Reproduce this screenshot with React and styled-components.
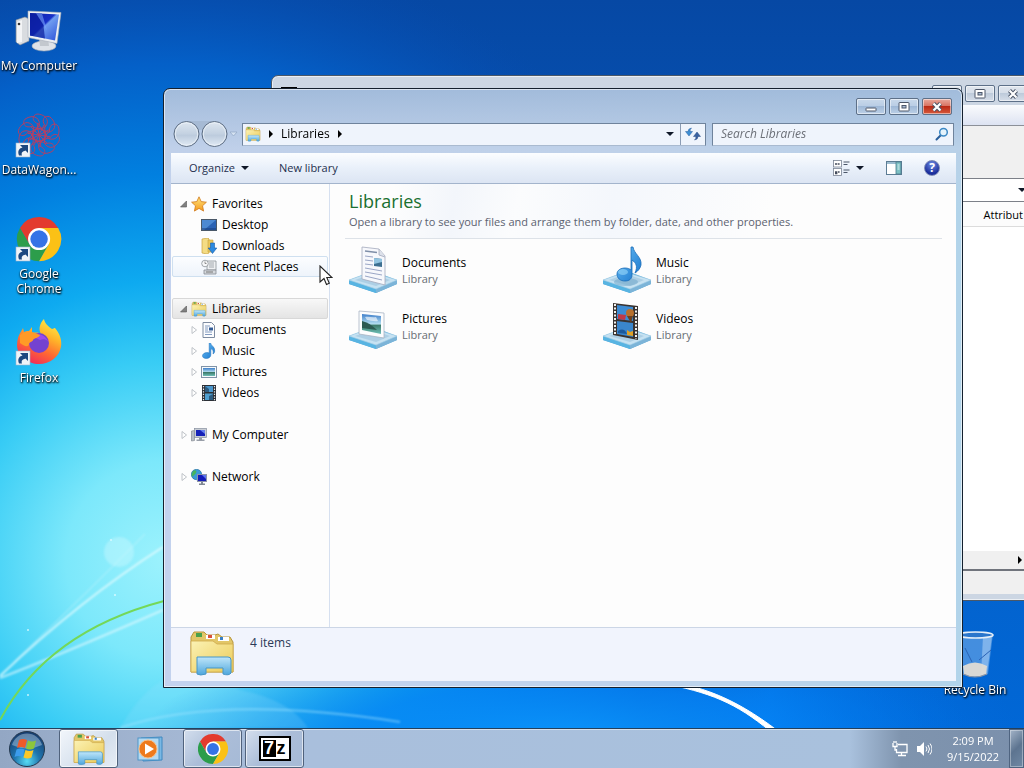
import React from 'react';
import styled, { createGlobalStyle } from 'styled-components';

const GlobalStyle = createGlobalStyle`
    *{
        box-sizing:border-box;
    }
    body{
        margin:0;
        overflow:hidden;
        font-family:"Open Sans", "Noto Sans", sans-serif;
        font-size:12px;
        line-height:16px;
        color:#000;
    }
    button, input, select{
        font:inherit;
        color:inherit;
        border:none;
        background:none;
        padding:0;
        margin:0;
        outline:none;
    }
    ul{
        list-style:none;
        margin:0;
        padding:0;
    }
    svg{
        display:block;
        flex:none;
    }
`;

/* ---------- wallpaper ---------- */

function Wallpaper() {
    return (
        <WallpaperSvg viewBox="0 0 1024 768" preserveAspectRatio="none" aria-hidden="true">
            <defs>
                <linearGradient id="sky" x1="0" y1="0" x2="0" y2="1">
                    <stop offset="0" stopColor="#0648a4" />
                    <stop offset=".6" stopColor="#0560c8" />
                    <stop offset="1" stopColor="#0068d8" />
                </linearGradient>
                <radialGradient id="glow" gradientUnits="userSpaceOnUse" cx="165" cy="560" r="620">
                    <stop offset="0" stopColor="#9cf2fd" />
                    <stop offset=".16" stopColor="#7ce8fb" />
                    <stop offset=".32" stopColor="#38ccf5" />
                    <stop offset=".45" stopColor="#0eaaf0" />
                    <stop offset=".62" stopColor="#0180e0" />
                    <stop offset=".8" stopColor="#0460c8" />
                    <stop offset="1" stopColor="#084cb0" stopOpacity="0" />
                </radialGradient>
                <radialGradient id="floor">
                    <stop offset="0" stopColor="#0c96fb" />
                    <stop offset=".5" stopColor="#0582f4" stopOpacity=".8" />
                    <stop offset="1" stopColor="#0070e4" stopOpacity="0" />
                </radialGradient>
                <linearGradient id="screen" x1="0" y1="0" x2="1" y2="1">
                    <stop offset="0" stopColor="#0b1fa8" />
                    <stop offset=".45" stopColor="#1830c8" />
                    <stop offset=".5" stopColor="#6f9cf0" />
                    <stop offset="1" stopColor="#2c50d8" />
                </linearGradient>
                <linearGradient id="folder" x1="0" y1="0" x2="1" y2="1">
                    <stop offset="0" stopColor="#fbf2b4" />
                    <stop offset="1" stopColor="#eccb58" />
                </linearGradient>
                <linearGradient id="holder" x1="0" y1="0" x2="0" y2="1">
                    <stop offset="0" stopColor="#bfe6fa" />
                    <stop offset="1" stopColor="#4ea6dc" />
                </linearGradient>
                <linearGradient id="note" x1="0" y1="0" x2="1" y2="1">
                    <stop offset="0" stopColor="#6cc0f6" />
                    <stop offset="1" stopColor="#1674cc" />
                </linearGradient>
                <linearGradient id="photo" x1="0" y1="0" x2="0" y2="1">
                    <stop offset="0" stopColor="#3f7fca" />
                    <stop offset=".5" stopColor="#b4def0" />
                    <stop offset=".56" stopColor="#3d7a6a" />
                    <stop offset="1" stopColor="#6ec0b8" />
                </linearGradient>
                <linearGradient id="fire" x1=".8" y1="0" x2=".3" y2="1">
                    <stop offset="0" stopColor="#fff14a" />
                    <stop offset=".35" stopColor="#ffb429" />
                    <stop offset=".65" stopColor="#ff6a32" />
                    <stop offset="1" stopColor="#f0285c" />
                </linearGradient>
                <radialGradient id="orb" cx=".5" cy=".85" r=".8">
                    <stop offset="0" stopColor="#58dcf4" />
                    <stop offset=".45" stopColor="#1f75ae" />
                    <stop offset="1" stopColor="#173f70" />
                </radialGradient>
                <linearGradient id="knob" x1="0" y1="0" x2="0" y2="1">
                    <stop offset="0" stopColor="#dfe7f0" />
                    <stop offset=".5" stopColor="#c3d1e1" />
                    <stop offset=".55" stopColor="#bccbdd" />
                    <stop offset="1" stopColor="#e2ebf5" />
                </linearGradient>
                <linearGradient id="star" x1="0" y1="0" x2="0" y2="1">
                    <stop offset="0" stopColor="#ffe680" />
                    <stop offset="1" stopColor="#f59a1c" />
                </linearGradient>
                <filter id="soft" x="-20%" y="-20%" width="140%" height="140%">
                    <feGaussianBlur stdDeviation="1" />
                </filter>
            </defs>
            <rect width="1024" height="768" fill="url(#sky)" />
            <ellipse cx="540" cy="740" rx="480" ry="170" fill="url(#floor)" />
            <rect width="1024" height="768" fill="url(#glow)" />
            <ellipse cx="560" cy="740" rx="420" ry="110" fill="url(#floor)" />
            <g fill="none" filter="url(#soft)">
                <path d="M0 678Q60 655 163 610" stroke="#dffaff" strokeWidth="2" opacity=".7" />
                <path d="M0 676Q80 600 163 547" stroke="#e8fcff" strokeWidth="2" opacity=".8" />
                <path d="M14 662Q90 590 145 534" stroke="#d8f8ff" strokeWidth="1" opacity=".6" />
                <path d="M120 728Q220 694 400 722" stroke="#a8e8ff" strokeWidth="2" opacity=".5" />
                <path d="M120 728Q170 640 240 690Q290 700 308 728" fill="#9fe6ff" opacity=".18" />
            </g>
            <path d="M0 720C30 664 84 622 164 601" fill="none" stroke="#74d858" strokeWidth="2" />
            <circle cx="119" cy="552" r="15" fill="#c8f8ff" opacity=".45" filter="url(#soft)" />
            <path d="M660 680C700 686 732 696 778 731L770 731C736 703 710 692 660 683Z" fill="#fff" stroke="#fff" strokeWidth="1" />
            <g fill="#e8fdff" opacity=".8">
                <circle cx="111" cy="540" r="1" />
                <circle cx="115" cy="595" r="1" />
                <circle cx="28" cy="695" r="1" />
                <circle cx="28" cy="630" r="1" />
            </g>
        </WallpaperSvg>
    );
}

/* ---------- desktop icons ---------- */

const ShortcutArrow = () => (
    <g>
        <rect x="1" y="33" width="14" height="14" fill="#f0f4f8" stroke="#9fb4cc" strokeWidth=".6" />
        <path d="M4 45.500c-1.500-4-.5-7 3.500-8L5 35h8v8l-2.500-2.500c-3 1-4.500 2-3.500 5z" fill="#1c4880" />
    </g>
);

const ComputerIcon = () => (
    <svg width="48" height="48" viewBox="0 0 48 48">
        <path d="M1 14l9-3 4 2v22l-9 4-4-3z" fill="#d9dce0" stroke="#8a9098" strokeWidth=".6" />
        <path d="M2 16l5-2v22l-5 1z" fill="#f3f4f6" />
        <circle cx="4" cy="18" r="1.3" fill="#333" />
        <ellipse cx="29" cy="40" rx="12" ry="5" fill="#dfe3e8" stroke="#a4abb4" strokeWidth=".6" />
        <path d="M24 32h9l1 8h-9z" fill="#c3c8ce" />
        <path d="M13 5l33 1.500-4 31-29-6z" fill="#eceff2" stroke="#a6adb8" strokeWidth=".6" />
        <path d="M15 7l29 1.500-4 26-25-5z" fill="url(#screen)" />
        <path d="M15 7l12 .5 3 25-15-3z" fill="#0a1c9c" opacity=".7" />
        <path d="M21 7.300l6 .3 5 17z" fill="#7aa5ff" opacity=".6" />
    </svg>
);

const WagonIcon = () => (
    <svg width="48" height="48" viewBox="0 0 48 48">
        <g fill="none" stroke="#c83a58" strokeWidth=".9" opacity=".9">
            {[0, 36, 72, 108, 144, 180, 216, 252, 288, 324].map((a) => (
                <g key={a} transform={`rotate(${a} 24 25)`}>
                    <path d="M24 14c-8-2-7-9-2-10 6 0 12 4 10 10-1 6-12 5-15 2" />
                    <path d="M24 25l5-10M21 18l6 1" />
                </g>
            ))}
            <circle cx="24" cy="25" r="6" />
        </g>
        <ShortcutArrow />
    </svg>
);

const ChromeShape = () => (
    <g>
        <path d="M24 12H44.800A24 24 0 0 0 3.200 12L13.600 30Z" fill="#e33b2e" />
        <path d="M13.600 30L3.200 12A24 24 0 0 0 24 48L34.400 30Z" fill="#2c9d4b" />
        <path d="M34.400 30L24 48A24 24 0 0 0 44.800 12H24Z" fill="#fbc116" />
        <circle cx="24" cy="24" r="12" fill="#fff" />
        <circle cx="24" cy="24" r="9.500" fill="#3573e6" />
    </g>
);

const ChromeIcon = () => (
    <svg width="48" height="48" viewBox="0 0 48 48">
        <g transform="translate(2 3) scale(.92)"><ChromeShape /></g>
        <ShortcutArrow />
    </svg>
);

const FirefoxIcon = () => (
    <svg width="48" height="48" viewBox="0 0 48 48">
        <path d="M29 1c1 5 4 7 8 10 3-1 2-1 3-1 5 6 7 12 6 19-2 10-11 17-22 17S2 38 2 27c0-6 2-11 5-15l1-2 1 4c2-1 3-1 5-1l3-4v6c4-1 8 0 9 1-3-5-1-11 3-15z" fill="url(#fire)" />
        <circle cx="24" cy="25" r="10" fill="#7442d0" />
        <path d="M17 18c6-4 13-1 16 5-3-2-5-2-8-1z" fill="#9a4bea" />
        <path d="M5 17c4-4 8-4 12-3l8 3c-1 3-6 3-7 5 0 2-3 1-4 4-1 4-5 2-9-1z" fill="#ff9a26" />
        <ShortcutArrow />
    </svg>
);

const BinIcon = () => (
    <svg width="48" height="48" viewBox="0 0 48 48">
        <path d="M7 4h35l-5 40q-13 6-25 0z" fill="#a8cdf2" opacity=".4" />
        <path d="M32 6h9l-5 38-6 2z" fill="#d6eaff" opacity=".4" />
        <path d="M12 36q12-7 24 0l-1 8q-12 5-22 0z" fill="#e0dcd4" opacity=".95" />
        <ellipse cx="24.500" cy="5" rx="17.500" ry="3" fill="#2a76cc" stroke="#e4eef8" strokeWidth="1.600" />
        <path d="M28 30l12-10M14 18l7 14" stroke="#2a62b4" strokeWidth="1" />
        <path d="M12 44q12 6 24 0" fill="none" stroke="#8b94a4" strokeWidth="1.200" />
    </svg>
);

/* ---------- explorer icons ---------- */

const LibrariesIcon = ({ size = 16 }) => (
    <svg width={size} height={size} viewBox="0 0 48 48">
        <path d="M3 8l3-5h10l3 3h8l3-1 4 3h8l3 5v30H3z" fill="#e2c668" stroke="#b8963c" />
        <path d="M8 4h6v4H8z" fill="#4aa04c" />
        <path d="M18 6h9v4h-9z" fill="#fff" />
        <path d="M20 6h4v3h-4z" fill="#d8503a" />
        <path d="M30 8h11v4H30z" fill="#fff" />
        <path d="M32 8h3v3h-3z" fill="#3a80c8" />
        <path d="M3 12h22l4 3h16v28H3z" fill="url(#folder)" stroke="#cfa94a" strokeWidth=".8" />
        <path d="M9 28h31q3 0 3 3v13q-2 3-8 1v-6H18v6q-6 2-9 0z" fill="url(#holder)" stroke="#4796c8" />
    </svg>
);

const StarIcon = () => (
    <svg width="16" height="16" viewBox="0 0 16 16">
        <path d="M8 .800l2.200 4.800 5.200.600-3.900 3.600 1.100 5.300L8 12.400l-4.600 2.700 1.100-5.300L.600 6.200l5.200-.600z" fill="url(#star)" stroke="#d0791a" strokeWidth=".8" />
    </svg>
);

const DesktopIcon = () => (
    <svg width="16" height="16" viewBox="0 0 16 16">
        <rect x=".5" y="2.500" width="15" height="11" fill="#2a62b4" stroke="#4a5868" />
        <path d="M1 3h14L3 13H1z" fill="#5b9ade" opacity=".7" />
        <path d="M1 12h14" stroke="#183c78" />
    </svg>
);

const DownloadsIcon = () => (
    <svg width="16" height="16" viewBox="0 0 16 16">
        <path d="M1 1l6-1 1 1v14l-2 1-5-1z" fill="#f4dc84" stroke="#c8a23c" strokeWidth=".7" />
        <path d="M7 2h5v12H7z" fill="#ecc85c" stroke="#c8a23c" strokeWidth=".6" />
        <path d="M9.500 5h4v5h2.300L11.500 15.500 7.200 10h2.300z" fill="#2c8ae0" stroke="#1a5ca8" strokeWidth=".6" />
    </svg>
);

const RecentIcon = () => (
    <svg width="16" height="16" viewBox="0 0 16 16">
        <path d="M6 2h9v9H6z" fill="#eef0f2" stroke="#8c9298" strokeWidth=".8" />
        <path d="M8 4h5M8 6h5M8 8h5" stroke="#90979e" strokeWidth=".8" />
        <path d="M3 11h12v4H3z" fill="#d4d8dc" stroke="#868c92" strokeWidth=".8" />
        <path d="M5 13h7" stroke="#777" />
        <circle cx="4" cy="4.500" r="3.300" fill="#f7f8f9" stroke="#8a9096" strokeWidth=".8" />
        <path d="M4 2.500v2h1.500" fill="none" stroke="#666" strokeWidth=".7" />
    </svg>
);

const DocIcon = () => (
    <svg width="16" height="16" viewBox="0 0 16 16">
        <path d="M2 .500h8.500l3 3v12H2z" fill="#fbfcfe" stroke="#7d8ba0" />
        <path d="M4 4h5M4 6h3M4 8h3M4 10h7M4 12.500h7" stroke="#7590b8" strokeWidth=".9" />
        <path d="M8 5.500h4v3H8z" fill="#345c96" />
    </svg>
);

const MusicIcon = () => (
    <svg width="16" height="16" viewBox="0 0 16 16">
        <path d="M8.200 0h1.300c.5 3 4.600 3.500 4.200 8-.1 1.500-.8 2.500-1.700 3 1-3-.6-4.600-2.200-5.500V12c0 2-2 3.500-4.400 3.500S1.500 14.500 1.500 12.800s2-3.200 4.200-3.200c1 0 1.800.1 2.500.5z" fill="url(#note)" stroke="#1b6cb8" strokeWidth=".5" />
    </svg>
);

const PictureIcon = () => (
    <svg width="16" height="16" viewBox="0 0 16 16">
        <rect x=".5" y="2.500" width="15" height="11" fill="#f6fafc" stroke="#8093a8" />
        <rect x="2" y="4" width="12" height="8" fill="url(#photo)" />
    </svg>
);

const VideoIcon = () => (
    <svg width="16" height="16" viewBox="0 0 16 16">
        <rect x="1" y="0" width="14" height="16" fill="#2c3036" />
        <rect x="4" y="1" width="8" height="6" fill="#4a96cc" />
        <rect x="4" y="8.500" width="8" height="6.500" fill="#4f9fd0" />
        <path d="M4 1l4 3v3H4zM12 9l-4 2v4h4z" fill="#2d5c80" />
        <path d="M2.500 1v15M13.500 1v15" stroke="#e8ecf0" strokeWidth="1.200" strokeDasharray="1.300 1.300" />
    </svg>
);

const SmallComputerIcon = () => (
    <svg width="16" height="16" viewBox="0 0 16 16">
        <path d="M.500 4l3-.500v10l-3 .500z" fill="#b8bec6" stroke="#788088" strokeWidth=".6" />
        <rect x="3.500" y="1.500" width="12" height="9" fill="#c8cdd4" stroke="#8890a0" strokeWidth=".7" />
        <rect x="5" y="3" width="9" height="6" fill="#1622b8" />
        <path d="M9 3h5v4z" fill="#6680f0" />
        <path d="M8 11h3v1.500h2.500V14h-8v-1.500H8z" fill="#989ea8" />
    </svg>
);

const NetworkIcon = () => (
    <svg width="16" height="16" viewBox="0 0 16 16">
        <circle cx="5.500" cy="5.500" r="5.200" fill="#3a9ad8" stroke="#186a98" strokeWidth=".6" />
        <path d="M2 2c3-2 4 0 3 2s-3 2-3 4L.500 6zM6 7c2-1 3 0 3 2l-3 1.500z" fill="#46b45c" />
        <rect x="6.500" y="5.500" width="9" height="7" fill="#141cb8" stroke="#8c94a8" />
        <path d="M11 6h4v4z" fill="#5c74f0" />
        <path d="M10 13h2v1.500h2V16H8v-1.500h2z" fill="#808894" />
    </svg>
);

const Tray = () => (
    <g>
        <path d="M0 34l24-9 24 9v4L27 47 0 38z" fill="#5aaad8" />
        <path d="M0 34l27 9v4L0 38z" fill="#58b4e2" />
        <path d="M27 43l21-9v4l-21 9z" fill="#7cb4d8" />
        <path d="M0 34l22-8 26 8-21 9z" fill="#c6e2f2" stroke="#a4cfe6" strokeWidth=".6" />
        <path d="M6 34l17-6 18 6-14 6z" fill="#a3c8e0" opacity=".7" />
    </g>
);

const LibraryArt = ({ kind }) => (
    <svg width="48" height="48" viewBox="0 0 48 48">
        <Tray />
        {kind === 'documents' && (
            <g>
                <path d="M13 1l17 2 6 7v29l-23-6z" fill="#f7f8fc" stroke="#a3a9bc" strokeWidth=".8" />
                <path d="M30 3v6l6 2" fill="#dde1ea" stroke="#a3a9bc" strokeWidth=".8" />
                <path d="M16 5l12 1.500" stroke="#7e8ea8" strokeWidth="1.500" />
                <path d="M16 10l8 1M16 14l8 1M16 18l8 1M16 22l17 3M16 26l17 3M16 30l17 4" stroke="#9aa6c6" />
                <path d="M25 12l8 1v8l-8-1z" fill="#3d6f90" />
                <path d="M25 12l8 1v3l-8 2z" fill="#92c4e0" />
            </g>
        )}
        {kind === 'music' && (
            <g>
                <ellipse cx="23" cy="36" rx="12" ry="4" fill="#6aa4c8" opacity=".5" />
                <path d="M28 1h2c1 7 9 10 8 18-1 4-3 6-6 8 3-7 1-10-3-13v15c0 4-3 6-7 6-5 0-8-3-8-7s4-6 8-6c3 0 5 1 6 2z" fill="url(#note)" stroke="#1b6cb8" strokeWidth=".8" />
                <ellipse cx="20" cy="26" rx="5" ry="3" fill="#9ad8fa" opacity=".6" />
            </g>
        )}
        {kind === 'pictures' && (
            <g>
                <path d="M10 9l25 2v25l-25-4z" fill="#fcfdfe" stroke="#a8b4c4" strokeWidth=".8" />
                <path d="M13 12l19 2v18l-19-4z" fill="url(#photo)" />
                <path d="M13 19c5 1 10 4 15 9l-15-2z" fill="#2c5a52" />
                <path d="M16 15c4-1 7 1 11 0l2 4c-4 1-8-1-11-1z" fill="#fff" opacity=".6" />
            </g>
        )}
        {kind === 'videos' && (
            <g>
                <path d="M10 1l25 3v34l-25-5z" fill="#3a3330" />
                <path d="M14 3l16 2v14l-16-2z" fill="#3d8cd4" />
                <path d="M14 19l16 2v14l-16-3z" fill="#3a86cc" />
                <path d="M15 12l8 1-1 5-7-1z" fill="#c03a48" />
                <circle cx="27" cy="11" r="4" fill="#b8702c" />
                <path d="M24 14h6l-2 7z" fill="#70401c" />
                <path d="M24 28l3 2 3-1v5l-6-1z" fill="#e0a024" />
                <path d="M15 29q6-4 9 3l-9-1z" fill="#1c5a9c" />
                <path d="M12 2v31M33 5v32" stroke="#f2f2f0" strokeWidth="2" strokeDasharray="2 1.500" />
            </g>
        )}
    </svg>
);

const Triangle = ({ dir }) => (
    <svg width="8" height="8" viewBox="0 0 8 8">
        {dir === 'down' && <path d="M0 2h8L4 6z" fill="#101828" />}
        {dir === 'right' && <path d="M2 0v8l4-4z" fill="#000" />}
        {dir === 'open' && <path d="M6.500 1v6h-6z" fill="#808080" stroke="#555" strokeWidth=".6" />}
        {dir === 'closed' && <path d="M2 .500v7L6.500 4z" fill="#fff" stroke="#b8bcc2" strokeWidth=".9" />}
    </svg>
);

const Glyph = ({ kind }) => (
    <svg width="14" height="12" viewBox="0 0 14 12">
        {kind === 'min' && <rect x="2" y="7" width="10" height="3" rx=".5" fill="#fff" stroke="#4c5668" />}
        {kind === 'max' && (
            <g fill="#fff" stroke="#4c5668">
                <rect x="2" y="1.500" width="10" height="8.500" rx=".5" />
                <rect x="5" y="4.500" width="4" height="2.500" fill="#a9bbd4" />
            </g>
        )}
        {kind === 'close' && (
            <g fill="none">
                <path d="M3.500 2.500l7 7M10.500 2.500l-7 7" stroke="#4c5668" strokeWidth="4.200" />
                <path d="M3.500 2.500l7 7M10.500 2.500l-7 7" stroke="#fff" strokeWidth="2.200" />
            </g>
        )}
    </svg>
);

/* ---------- data ---------- */

const shortcuts = [
    { label: 'My Computer', Icon: ComputerIcon },
    { label: 'DataWagon...', Icon: WagonIcon },
    { label: 'Google Chrome', Icon: ChromeIcon },
    { label: 'Firefox', Icon: FirefoxIcon },
];

const tree = [
    {
        label: 'Favorites', Icon: StarIcon, arrow: 'open',
        items: [
            { label: 'Desktop', Icon: DesktopIcon },
            { label: 'Downloads', Icon: DownloadsIcon },
            { label: 'Recent Places', Icon: RecentIcon, state: 'hover' },
        ],
    },
    {
        label: 'Libraries', Icon: LibrariesIcon, arrow: 'open', state: 'selected',
        items: [
            { label: 'Documents', Icon: DocIcon, arrow: 'closed' },
            { label: 'Music', Icon: MusicIcon, arrow: 'closed' },
            { label: 'Pictures', Icon: PictureIcon, arrow: 'closed' },
            { label: 'Videos', Icon: VideoIcon, arrow: 'closed' },
        ],
    },
    { label: 'My Computer', Icon: SmallComputerIcon, arrow: 'closed', items: [] },
    { label: 'Network', Icon: NetworkIcon, arrow: 'closed', items: [] },
];

const libraries = ['Documents', 'Music', 'Pictures', 'Videos'];

/* ---------- parts ---------- */

function WindowButtons({ active }) {
    return (
        <Caption>
            <CaptionButton aria-label="Minimize"><Glyph kind="min" /></CaptionButton>
            <CaptionButton aria-label="Maximize"><Glyph kind="max" /></CaptionButton>
            <CaptionButton aria-label="Close" $danger={active}><Glyph kind="close" /></CaptionButton>
        </Caption>
    );
}

function TreeRow({ item, nested }) {
    const { label, Icon, arrow, state } = item;
    return (
        <TreeButton $nested={nested} $state={state}>
            <Twisty>{arrow && <Triangle dir={arrow} />}</Twisty>
            <Icon />
            <TreeLabel>{label}</TreeLabel>
        </TreeButton>
    );
}

function ArchiveWindow() {
    return (
        <BackWindow>
            <BackTitle>
                <BackLogo />
                <WindowButtons />
            </BackTitle>
            <BackMenu />
            <BackTools />
            <BackAddress>
                <BackSelect aria-label="Path" />
                <Triangle dir="down" />
            </BackAddress>
            <BackHeader>Attribut</BackHeader>
            <BackList />
            <BackScroll><Triangle dir="right" /></BackScroll>
            <BackStatus />
        </BackWindow>
    );
}

function ExplorerWindow() {
    const [search, setSearch] = React.useState('');
    return (
        <Window>
            <WindowButtons active />
            <NavRow>
                <HistoryButtons aria-label="Back and forward">
                    <svg width="70" height="28" viewBox="0 0 70 28">
                        <path d="M13 1h28v6q-14 6-28 0z" fill="#a3b7d0" opacity=".8" />
                        <g stroke="#5c6c82" fill="url(#knob)">
                            <circle cx="13.500" cy="14" r="12.500" />
                            <circle cx="41.500" cy="14" r="12.500" />
                        </g>
                        <g stroke="#eef4fa" fill="none" opacity=".8">
                            <circle cx="13.500" cy="14" r="11.200" />
                            <circle cx="41.500" cy="14" r="11.200" />
                        </g>
                        <path d="M57 12h7l-3.500 4z" fill="#d5e2f2" stroke="#90a6c4" strokeWidth=".7" />
                    </svg>
                </HistoryButtons>
                <AddressBar>
                    <LibrariesIcon />
                    <Triangle dir="right" />
                    <Crumb>Libraries</Crumb>
                    <Triangle dir="right" />
                    <Spacer />
                    <AddressButton aria-label="Previous locations"><Triangle dir="down" /></AddressButton>
                    <RefreshButton aria-label="Refresh">
                        <svg width="16" height="14" viewBox="0 0 16 14">
                            <path d="M6.500 1Q5 2 5 4.500h2.500L4 9 .5 4.500H3Q3 1.500 6.500 1z" fill="#3f8fd4" stroke="#2a5f9c" strokeWidth=".5" />
                            <path d="M9.500 13Q11 12 11 9.500H8.500L12 5l3.500 4.500H13q0 3-3.500 3.500z" fill="#3a62a0" stroke="#2a4a84" strokeWidth=".5" />
                        </svg>
                    </RefreshButton>
                </AddressBar>
                <SearchBox>
                    <input type="text" aria-label="Search Libraries" placeholder="Search Libraries" value={search} onChange={(e) => setSearch(e.target.value)} />
                    <svg width="14" height="14" viewBox="0 0 14 14">
                        <path d="M6 8L1.500 12.500" stroke="#2a5f9c" strokeWidth="2" strokeLinecap="round" />
                        <circle cx="8.500" cy="5.300" r="3.800" fill="#e4f3fc" stroke="#3c88c4" strokeWidth="1.500" />
                    </svg>
                </SearchBox>
            </NavRow>
            <Client>
                <Toolbar>
                    <ToolButton>Organize <Triangle dir="down" /></ToolButton>
                    <ToolButton>New library</ToolButton>
                    <Spacer />
                    <ToolButton aria-label="Change your view">
                        <svg width="17" height="16" viewBox="0 0 17 16">
                            <g fill="#fff" stroke="#7a8494" strokeWidth=".8">
                                <rect x=".5" y=".5" width="8" height="6.500" />
                                <rect x=".5" y="8.500" width="8" height="7" />
                            </g>
                            <path d="M2 4h5M2 12h5M2 13.500h3" stroke="#444c5c" strokeWidth="1.500" strokeDasharray="2 .6" />
                            <path d="M10.500 2h6M10.500 4.500h4M10.500 10h6M10.500 12.500h4" stroke="#4b5668" />
                        </svg>
                        <Triangle dir="down" />
                    </ToolButton>
                    <ToolButton aria-label="Preview pane">
                        <svg width="16" height="14" viewBox="0 0 16 14">
                            <rect x=".5" y=".5" width="15" height="13" fill="#fff" stroke="#5c7c94" />
                            <path d="M1 2h14" stroke="#9cbcd0" strokeWidth="2" />
                            <rect x="10" y="1" width="5" height="12" fill="#7cc0c4" stroke="#4c7c8c" strokeWidth=".8" />
                            <path d="M11.500 4h2M11.500 6h2M11.500 8h2" stroke="#e4f4f4" />
                        </svg>
                    </ToolButton>
                    <ToolButton aria-label="Help">
                        <HelpBadge>?</HelpBadge>
                    </ToolButton>
                </Toolbar>
                <Panes>
                    <Sidebar aria-label="Navigation pane">
                        {tree.map((group) => (
                            <TreeGroup key={group.label}>
                                <li><TreeRow item={group} /></li>
                                {group.items.map((item) => (
                                    <li key={item.label}><TreeRow item={item} nested /></li>
                                ))}
                            </TreeGroup>
                        ))}
                    </Sidebar>
                    <Content>
                        <ContentHead>
                            <h1>Libraries</h1>
                            <p>Open a library to see your files and arrange them by folder, date, and other properties.</p>
                        </ContentHead>
                        <LibraryGrid>
                            {libraries.map((name) => (
                                <LibraryItem key={name}>
                                    <LibraryArt kind={name.toLowerCase()} />
                                    <span>{name}<small>Library</small></span>
                                </LibraryItem>
                            ))}
                        </LibraryGrid>
                    </Content>
                </Panes>
                <Details>
                    <LibrariesIcon size={48} />
                    <span>4 items</span>
                </Details>
            </Client>
        </Window>
    );
}

function Taskbar() {
    return (
        <Bar>
            <StartButton aria-label="Start">
                <svg width="38" height="38" viewBox="0 0 38 38">
                    <circle cx="19" cy="19" r="17.500" fill="url(#orb)" stroke="#24384e" />
                    <path d="M4 15a15.500 15.500 0 0 1 30 0q-15 7-30 0z" fill="#cfe4f4" opacity=".4" />
                    <path d="M11 10q4-2 8 0l-2 8q-4-2-8 0z" fill="#ee5a2a" />
                    <path d="M20 10.500q4 2 8 0l-2 8q-4 2-8 0z" fill="#8cc63c" />
                    <path d="M8.500 19.500q4-2 8 0l-2 7.500q-4-2-8 0z" fill="#3c9cec" />
                    <path d="M17.500 20q4 2 8 0l-2 7.500q-4 2-8 0z" fill="#fcc828" />
                </svg>
            </StartButton>
            <TaskButton aria-label="Windows Explorer" $open $active>
                <LibrariesIcon size={34} />
            </TaskButton>
            <TaskButton aria-label="Media Player">
                <svg width="30" height="28" viewBox="0 0 30 28">
                    <path d="M5 3l21-1v23l-19 1z" fill="#7ab8e4" stroke="#3f88c0" />
                    <rect x="2" y="3" width="21" height="22" fill="#b4daf2" stroke="#4f96c8" />
                    <circle cx="12" cy="14" r="9" fill="#ee7a1c" stroke="#f8c088" />
                    <path d="M9 8.500v11l9-5.500z" fill="#fff" />
                </svg>
            </TaskButton>
            <TaskButton aria-label="Google Chrome" $open>
                <svg width="30" height="30" viewBox="0 0 48 48"><ChromeShape /></svg>
            </TaskButton>
            <TaskButton aria-label="7-Zip" $open>
                <ZipLogo><b>7</b><span>z</span></ZipLogo>
            </TaskButton>
            <Spacer />
            <TrayArea>
                <svg width="16" height="16" viewBox="0 0 16 16">
                    <g fill="none" stroke="#fff" strokeWidth="1.300">
                        <path d="M6 3.500h9v8H4.500V8" />
                        <path d="M9.500 12v2M6 14.500h8" />
                        <path d="M1 2v3.500h4V2M2 0v2M4 0v2M3 5.500V9h1.500" />
                    </g>
                </svg>
                <svg width="16" height="16" viewBox="0 0 16 16">
                    <path d="M1 5h3l4-4v14l-4-4H1z" fill="#fff" />
                    <path d="M10 5.500q2 2.500 0 5M12 4q3 4 0 8M14 2.500q4 5.500 0 11" fill="none" stroke="#fff" />
                </svg>
                <Clock><span>2:09 PM</span><span>9/15/2022</span></Clock>
            </TrayArea>
            <ShowDesktop aria-label="Show desktop" />
        </Bar>
    );
}

function App() {
    return (
        <Desktop>
            <GlobalStyle />
            <Wallpaper />
            <Workspace>
                <ShortcutList>
                    {shortcuts.map(({ label, Icon }) => (
                        <Shortcut key={label}><Icon /><span>{label}</span></Shortcut>
                    ))}
                </ShortcutList>
                <RecycleBin><BinIcon /><span>Recycle Bin</span></RecycleBin>
                <ArchiveWindow />
                <ExplorerWindow />
                <Pointer width="14" height="22" viewBox="0 0 14 22" aria-hidden="true">
                    <path d="M1 1v16l4-3.500 2.500 6 2.800-1.200L7.800 12.500H13z" fill="#fff" stroke="#222" strokeWidth="1.100" />
                </Pointer>
            </Workspace>
            <Taskbar />
        </Desktop>
    );
}

/* ---------- styles ---------- */

const Desktop = styled.div`
    position:relative;
    display:flex;
    flex-direction:column;
    height:100vh;
    overflow:hidden;
`;

const WallpaperSvg = styled.svg`
    position:absolute;
    inset:0;
    width:100%;
    height:100%;
`;

const Workspace = styled.main`
    position:relative;
    flex:1;
    min-height:0;
`;

const ShortcutList = styled.div`
    display:flex;
    flex-direction:column;
    align-items:flex-start;
    padding-top:6px;
`;

const Shortcut = styled.button`
    display:flex;
    flex-direction:column;
    align-items:center;
    gap:4px;
    width:78px;
    height:104px;
    color:#fff;
    line-height:15px;
    text-shadow:0 1px 2px #000, 1px 1px 2px #000;
`;

const RecycleBin = styled(Shortcut)`
    position:absolute;
    right:10px;
    bottom:31px;
    height:auto;
    white-space:nowrap;
`;

const Spacer = styled.div`
    flex:1;
`;

const Caption = styled.div`
    display:flex;
    justify-content:flex-end;
    gap:3px;
    padding:9px 4px 0 0;
`;

const CaptionButton = styled.button`
    display:flex;
    align-items:center;
    justify-content:center;
    width:30px;
    height:17px;
    border:1px solid #5d7088;
    border-radius:2px;
    box-shadow:inset 0 0 0 1px rgba(255,255,255,.5);
    background:${(p) => (p.$danger
        ? 'linear-gradient(#e9a99d, #d8705f 48%, #bb2a16 50%, #d65a3c)'
        : 'linear-gradient(rgba(255,255,255,.4), rgba(255,255,255,.2) 48%, rgba(90,120,160,.12) 50%, rgba(255,255,255,.2))')};
`;

const Window = styled.section`
    position:absolute;
    left:163px;
    top:88px;
    right:61px;
    bottom:40px;
    display:flex;
    flex-direction:column;
    padding:0 6px 6px 7px;
    border:1px solid #14202e;
    border-radius:7px 7px 0 0;
    box-shadow:inset 0 0 0 1px rgba(255,255,255,.6);
    background:
        linear-gradient(rgba(160,186,218,.95), rgba(190,207,231,.6) 60px, rgba(190,207,231,0) 120px),
        linear-gradient(90deg, #c3d2ee, #bfd3ec 60%, #b2d4ea);
`;

const NavRow = styled.div`
    display:flex;
    align-items:center;
    gap:6px;
    height:38px;
    padding:0 2px;
`;

const HistoryButtons = styled.button`
    width:63px;
`;

const AddressBar = styled.div`
    flex:1;
    display:flex;
    align-items:center;
    gap:6px;
    height:23px;
    padding-left:2px;
    border:1px solid #6f839c;
    border-bottom-color:#a9bad0;
    background:#eff4fc;
`;

const Crumb = styled.button``;

const AddressButton = styled.button`
    display:flex;
`;

const RefreshButton = styled.button`
    display:flex;
    align-items:center;
    justify-content:center;
    width:25px;
    height:100%;
    border-left:1px solid #8b9cb4;
`;

const SearchBox = styled.label`
    flex:0 1 242px;
    display:flex;
    align-items:center;
    height:23px;
    padding:0 4px 0 8px;
    border:1px solid #6f839c;
    border-bottom-color:#a9bad0;
    background:#eff4fc;

    input{
        flex:1;
        min-width:0;
    }
    input::placeholder{
        color:#6c7078;
        opacity:1;
        font-style:italic;
    }
`;

const Client = styled.div`
    flex:1;
    min-height:0;
    display:flex;
    flex-direction:column;
    background:#fdfdfd;
`;

const Toolbar = styled.div`
    display:flex;
    align-items:center;
    gap:22px;
    height:31px;
    padding:0 16px 0 18px;
    font-size:11px;
    color:#1e2f4d;
    border-bottom:1px solid #a3b4cc;
    background:linear-gradient(#fbfdff, #e9f0fa 50%, #dce5f3);
`;

const ToolButton = styled.button`
    display:flex;
    align-items:center;
    gap:6px;

    &:nth-child(2){
        margin-left:8px;
    }
`;

const HelpBadge = styled.span`
    display:flex;
    align-items:center;
    justify-content:center;
    width:16px;
    height:16px;
    border-radius:50%;
    border:1px solid #7c88b4;
    color:#fff;
    font-size:12px;
    font-weight:700;
    background:radial-gradient(circle at 50% 25%, #6f8ce4, #1b2f9c 70%);
`;

const Panes = styled.div`
    flex:1;
    min-height:0;
    display:flex;
`;

const Sidebar = styled.nav`
    flex:0 0 159px;
    display:flex;
    flex-direction:column;
    gap:21px;
    padding:9px 1px 0;
    border-right:1px solid #d6e0f0;
`;

const TreeGroup = styled.ul`
    display:flex;
    flex-direction:column;
`;

const stateStyle = {
    hover: 'border-color:#cfe0f0; background:linear-gradient(#fcfdff, #eef4fb);',
    selected: 'border-color:#d8d8d8; background:linear-gradient(#f8f8f8, #e4e4e4);',
};

const TreeButton = styled.button`
    display:flex;
    align-items:center;
    gap:3px;
    width:100%;
    height:21px;
    padding-left:${(p) => (p.$nested ? '17px' : '7px')};
    border:1px solid transparent;
    border-radius:2px;
    text-align:left;
    white-space:nowrap;
    ${(p) => stateStyle[p.$state] || ''}
`;

const TreeLabel = styled.span`
    padding-left:2px;
`;

const Twisty = styled.span`
    display:flex;
    width:8px;
`;

const Content = styled.div`
    flex:1;
    min-width:0;
    padding:0 14px 0 15px;
    background:linear-gradient(100deg, #fdfdfd 10%, #f3f6fb 20%, #fbfcfd 30%, #f4f7fc 45%, #fdfdfd 70%) no-repeat 0 0 / 100% 54px;
`;

const ContentHead = styled.header`
    padding:5px 4px 8px;
    border-bottom:1px solid #dde2e8;

    h1{
        margin:0;
        font-size:18px;
        line-height:25px;
        font-weight:400;
        color:#1a7030;
    }
    p{
        margin:0;
        font-size:11px;
        color:#5c6270;
    }
`;

const LibraryGrid = styled.div`
    display:grid;
    grid-template-columns:repeat(auto-fill, 254px);
    gap:8px 0;
    padding:7px 4px;
`;

const LibraryItem = styled.button`
    display:flex;
    align-items:center;
    gap:5px;
    height:48px;
    text-align:left;

    span{
        padding-top:2px;
    }
    small{
        display:block;
        font-size:11px;
        color:#686d74;
    }
`;

const Details = styled.footer`
    display:flex;
    gap:14px;
    height:54px;
    padding:1px 17px 0;
    border-top:1px solid #ccd6e6;
    color:#2b3a58;
    background:#f1f4fd;

    span{
        padding-top:6px;
    }
`;

const Pointer = styled.svg`
    position:absolute;
    left:319px;
    top:265px;
`;

const BackWindow = styled.section`
    position:absolute;
    left:271px;
    right:-9px;
    top:75px;
    bottom:127px;
    display:flex;
    flex-direction:column;
    padding:0 0 6px;
    border:1px solid #4a5868;
    border-radius:7px 7px 0 0;
    box-shadow:inset 0 0 0 1px rgba(255,255,255,.6);
    background:#ccd6e3;
`;

const BackTitle = styled.div`
    display:flex;
    align-items:flex-start;
    justify-content:space-between;
    height:29px;
`;

const BackLogo = styled.span`
    width:16px;
    height:4px;
    margin:11px 9px;
    background:#000;
`;

const BackMenu = styled.div`
    height:20px;
    background:linear-gradient(#fafbfd, #dde3f2);
`;

const BackTools = styled.div`
    height:53px;
    border-top:1px solid #8c9098;
    background:#f0f0f0;
`;

const BackAddress = styled.div`
    display:flex;
    align-items:center;
    justify-content:flex-end;
    height:24px;
    padding-right:6px;
    border:solid #7c8088;
    border-width:1px 0;
    background:#fff;
`;

const BackSelect = styled.select`
    appearance:none;
    flex:1;
    height:100%;
`;

const BackHeader = styled.div`
    height:25px;
    padding:5px 9px;
    font-size:11px;
    text-align:right;
    border-bottom:1px solid #dcdcdc;
    background:#fcfcfc;
`;

const BackList = styled.div`
    flex:1;
    background:#fff;
`;

const BackScroll = styled.div`
    display:flex;
    align-items:center;
    justify-content:flex-end;
    height:20px;
    padding-right:8px;
    border-bottom:2px solid #70747c;
    background:#f0f0f0;
`;

const BackStatus = styled.div`
    height:23px;
    background:#f0f0f0;
`;

const Bar = styled.footer`
    position:relative;
    display:flex;
    align-items:stretch;
    gap:3px;
    height:40px;
    border-top:1px solid #24405c;
    box-shadow:inset 0 1px 0 rgba(255,255,255,.5);
    background:linear-gradient(90deg, #93a7c4, #a3b6d2 16%, #a9bfdc 30%, #a9c1dd 83%, #7f94ae 88%, #7b90ac);
`;

const StartButton = styled.button`
    width:56px;
    padding-left:8px;
`;

const TaskButton = styled.button`
    display:flex;
    align-items:center;
    justify-content:center;
    width:59px;
    border:1px solid ${(p) => (p.$open ? '#50627c' : 'transparent')};
    border-radius:3px;
    box-shadow:${(p) => (p.$open ? 'inset 0 0 0 1px rgba(255,255,255,.6)' : 'none')};
    background:${(p) => {
        if (p.$active) return 'linear-gradient(135deg, #f2f6fb, #d4dfec 60%, #e6edf5)';
        return p.$open ? 'linear-gradient(135deg, #d3deed, #abbdd8 50%, #a6bad6)' : 'none';
    }};
`;

const ZipLogo = styled.span`
    display:flex;
    align-items:stretch;
    width:32px;
    height:25px;
    padding:2px;
    border:2px solid #000;
    background:#fff;
    font-family:"Liberation Sans", sans-serif;
    font-weight:700;
    font-size:18px;
    line-height:17px;

    b{
        width:13px;
        color:#fff;
        background:#000;
    }
    span{
        width:11px;
    }
`;

const TrayArea = styled.div`
    display:flex;
    align-items:center;
    gap:8px;
    color:#fff;
`;

const Clock = styled.time`
    display:flex;
    flex-direction:column;
    align-items:center;
    width:66px;
    padding-top:1px;
    font-size:11px;
`;

const ShowDesktop = styled.button`
    width:15px;
    border:1px solid #4f6480;
    box-shadow:inset 0 0 0 1px rgba(255,255,255,.35);
    background:linear-gradient(135deg, #a4b4c8, #5d7490 50%, #7088a4);
`;

export default App;
